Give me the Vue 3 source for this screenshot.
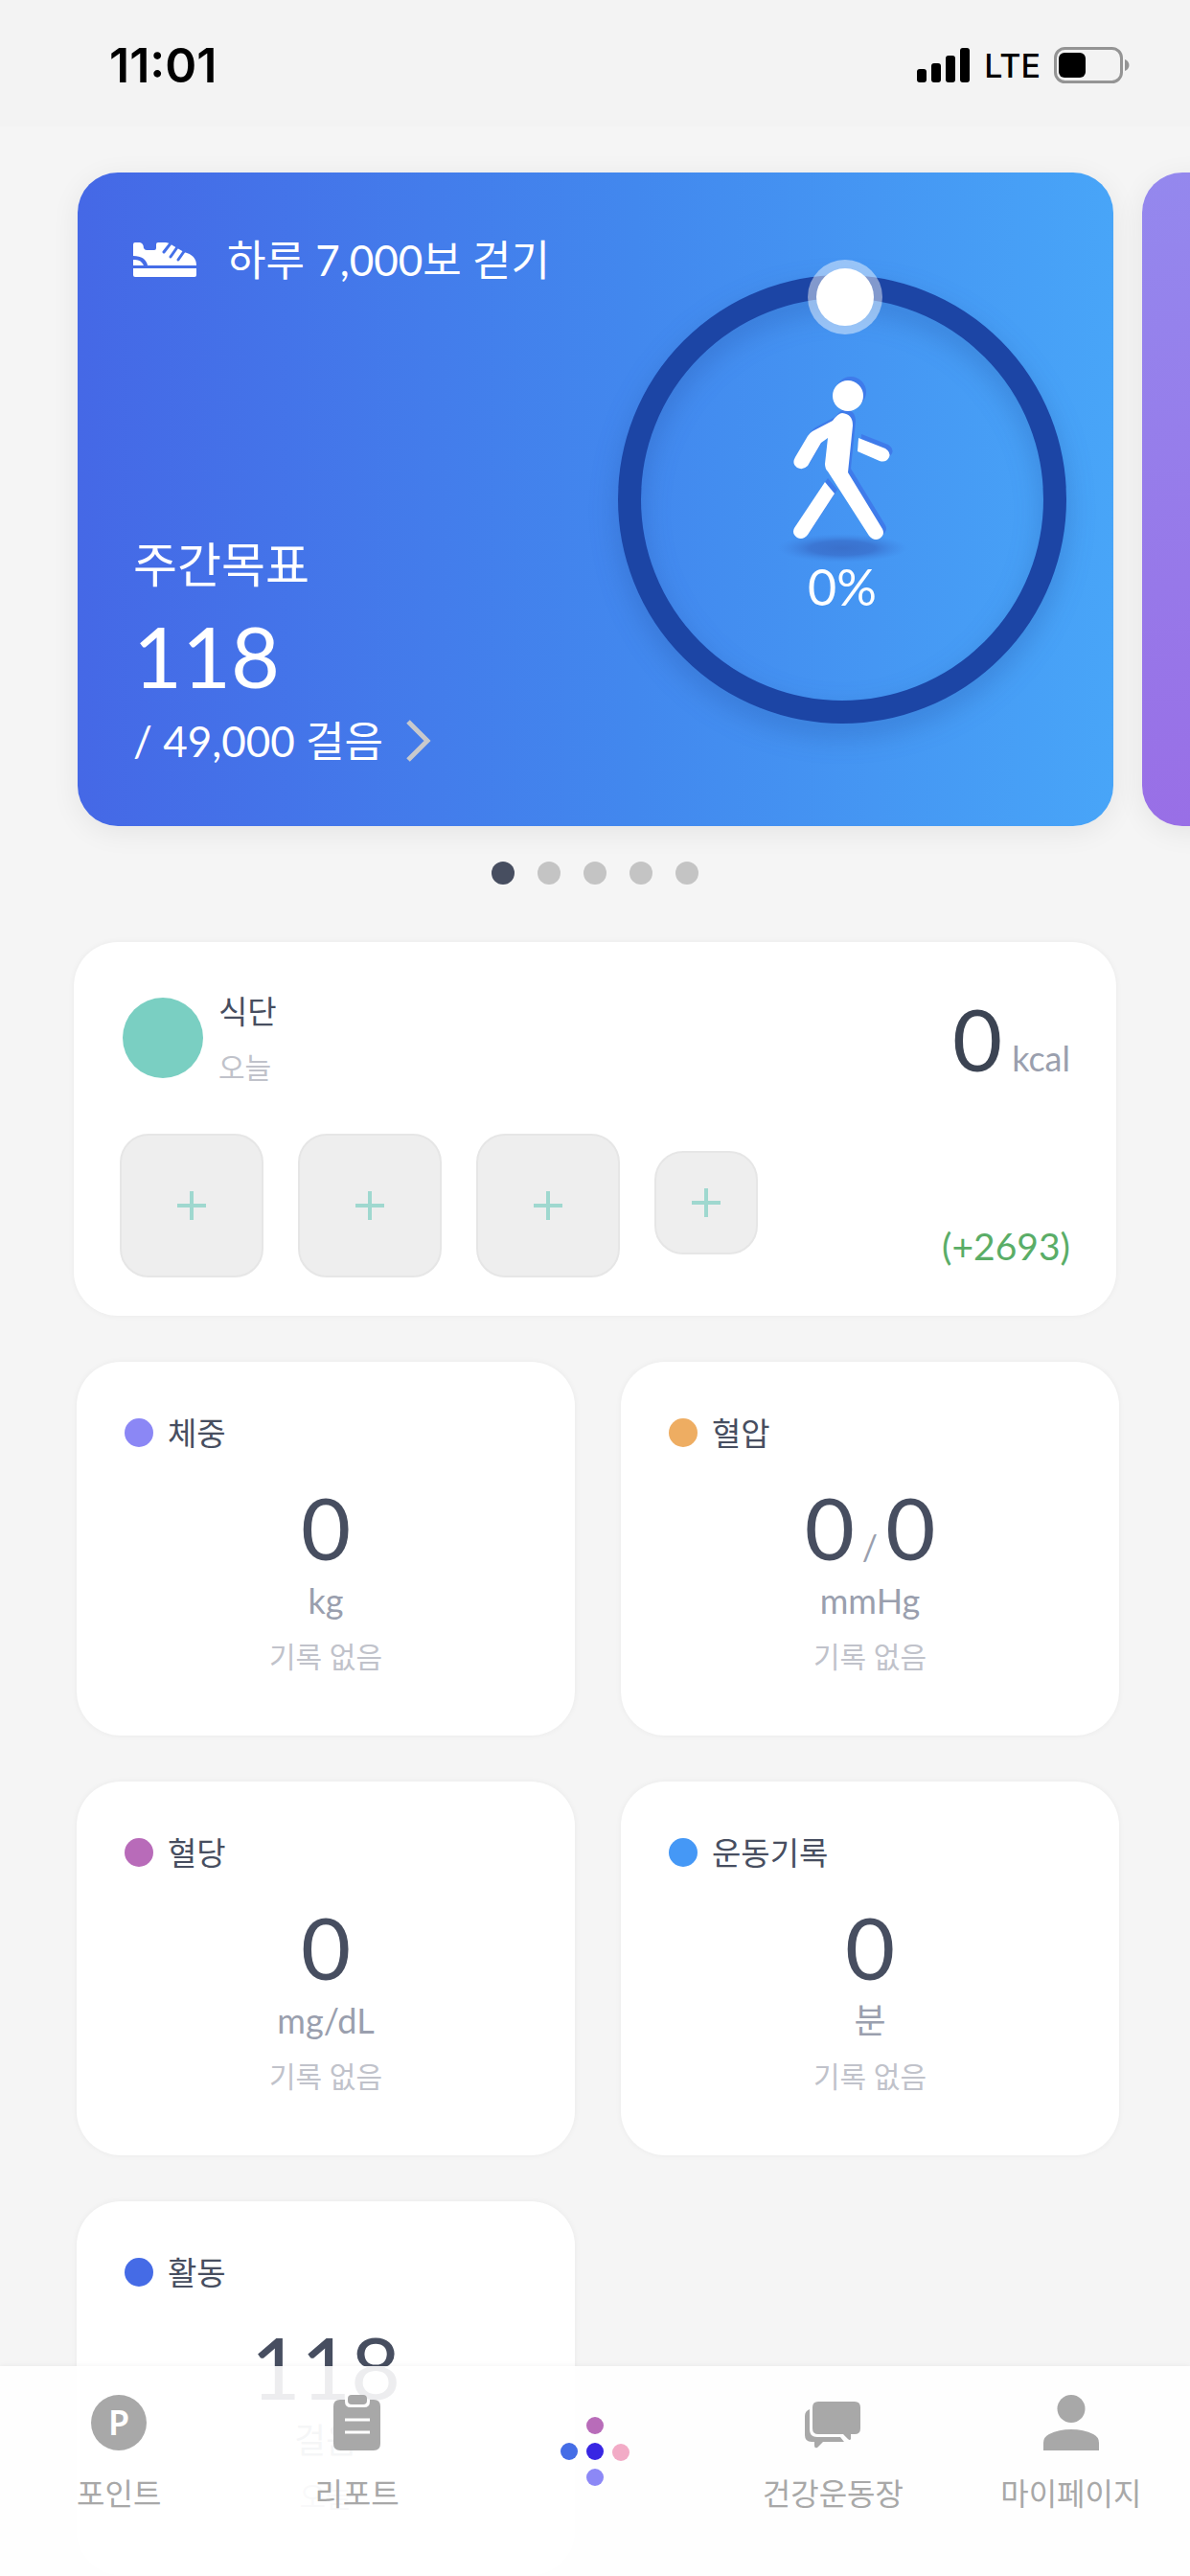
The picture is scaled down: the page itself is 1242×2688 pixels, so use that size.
<script setup>
import { ref } from 'vue'

const slides = 5
const activeSlide = ref(0)

const meals = ['아침', '점심', '저녁', '간식']

const records = [
  { label: '체중', color: '#8b87f5', values: ['0'], unit: 'kg', note: '기록 없음' },
  { label: '혈압', color: '#eead62', values: ['0', '0'], unit: 'mmHg', note: '기록 없음' },
  { label: '혈당', color: '#b86bb9', values: ['0'], unit: 'mg/dL', note: '기록 없음' },
  { label: '운동기록', color: '#4598f6', values: ['0'], unit: '분', note: '기록 없음' },
  { label: '활동', color: '#456be6', values: ['118'], unit: '걸음', note: '오늘' },
]
</script>

<template>
  <div class="app">
    <header class="status">
      <time class="clock">11:01</time>
      <div class="indicators">
        <svg width="56" height="36" viewBox="0 0 56 36" aria-hidden="true">
          <rect x="0" y="22" width="10" height="14" rx="3" />
          <rect x="15" y="16" width="10" height="20" rx="3" />
          <rect x="30" y="8" width="10" height="28" rx="3" />
          <rect x="45" y="0" width="10" height="36" rx="3" />
        </svg>
        <span class="network">LTE</span>
        <svg width="79" height="38" viewBox="0 0 79 38" aria-hidden="true">
          <rect x="1.5" y="1.5" width="69" height="35" rx="10" fill="none" stroke="#949494" stroke-width="3" />
          <rect x="5" y="6" width="28" height="26" rx="6" />
          <path d="M74 13c6 2 6 10 0 12z" fill="#949494" />
        </svg>
      </div>
    </header>

    <main class="content">
      <section class="carousel">
        <article class="slide slide-walk">
          <div class="goal">
            <h2 class="goal-title">
              <svg width="67" height="36" viewBox="0 0 67 36" fill="#fff" aria-hidden="true">
                <path d="M0 27h66v7q0 2-2 2H2q-2 0-2-2z" />
                <path d="M0 2q0-2 2-2h5q4 1 4 6 1 2 3 2h8q2 0 2-2V2q0-2 2-2h8q3 0 7 3l12 7q13 3 13 14H15Q13 14 0 14z" />
                <path d="M0 18q8-1 11 6H0z" />
                <path d="M39 1l-7 9M46 5l-7 10M54 8l-7 10" stroke="#4470e9" stroke-width="3" stroke-linecap="round" />
              </svg>
              <span>하루 7,000보 걷기</span>
            </h2>
            <div class="goal-body">
              <p class="goal-label">주간목표</p>
              <p class="goal-count">118</p>
              <a class="goal-link" href="#steps">
                <span>/ 49,000 걸음</span>
                <svg width="26" height="44" viewBox="0 0 26 44" fill="none" stroke="#c8c9cc" stroke-width="5" aria-hidden="true">
                  <path d="M2 2l20 20L2 42" />
                </svg>
              </a>
            </div>
          </div>
          <div class="ring">
            <svg class="ring-track" viewBox="0 0 468 468" aria-hidden="true">
              <circle class="ring-circle" cx="234" cy="234" r="222" fill="none" stroke="#1c45a5" stroke-width="24" />
              <circle cx="237" cy="23" r="39" fill="#fff" fill-opacity=".45" />
              <circle cx="237" cy="23" r="30" fill="#fff" />
            </svg>
            <div class="ring-info">
              <svg width="136" height="198" viewBox="0 0 136 198" aria-hidden="true">
                <defs>
                  <radialGradient id="ground">
                    <stop offset="0" stop-color="#3a70cb" />
                    <stop offset=".5" stop-color="#3a72cf" stop-opacity=".85" />
                    <stop offset="1" stop-color="#3f84e2" stop-opacity="0" />
                  </radialGradient>
                  <g id="walker">
                    <circle cx="74" cy="23" r="16" />
                    <path d="M58 49L37 60q-3 2-5 5L19 87q-4 7 2 11 6 3 11-2l14-24 7-5-3 27q0 5 3 8l43 67q5 6 11 3 6-4 3-10L74 103l5-49q0-12-11-13-4 0-10 8z" />
                    <path d="M85 67l28 11q6 4 4 9-3 6-10 4L84 81z" />
                    <path d="M50 113l10 12-28 43q-5 6-11 3-6-4-3-10z" />
                  </g>
                </defs>
                <ellipse cx="68" cy="182" rx="68" ry="15" fill="url(#ground)" />
                <use href="#walker" x="3" y="-4" fill="#3f7bea" />
                <use href="#walker" fill="#fff" />
              </svg>
              <span class="percent">0%</span>
            </div>
          </div>
        </article>
        <article class="slide slide-next"></article>
      </section>

      <nav class="pager" aria-label="slides">
        <button
          v-for="n in slides"
          :key="n"
          type="button"
          class="pager-dot"
          :class="{ active: n - 1 === activeSlide }"
          :aria-label="`${n}`"
          @click="activeSlide = n - 1"
        ></button>
      </nav>

      <section class="diet">
        <div class="diet-head">
          <span class="diet-badge"></span>
          <div class="diet-name">
            <h3 class="label">식단</h3>
            <p class="note">오늘</p>
          </div>
          <p class="diet-total"><span class="number">0</span><span class="unit">kcal</span></p>
        </div>
        <div class="diet-row">
          <button v-for="(meal, i) in meals" :key="meal" type="button" class="meal" :class="{ small: i === 3 }" :aria-label="meal">
            <svg width="30" height="30" viewBox="0 0 30 30" stroke="#9fd8cf" stroke-width="4" aria-hidden="true">
              <path d="M15 0v30M0 15h30" />
            </svg>
          </button>
          <p class="diet-left">(+2693)</p>
        </div>
      </section>

      <section class="grid">
        <article v-for="item in records" :key="item.label" class="card">
          <h3 class="card-head">
            <span class="dot" :style="{ background: item.color }"></span>
            <span class="label">{{ item.label }}</span>
          </h3>
          <p class="value">
            <template v-for="(value, i) in item.values" :key="i">
              <span v-if="i" class="slash">/</span>
              <span class="number">{{ value }}</span>
            </template>
          </p>
          <p class="unit">{{ item.unit }}</p>
          <p class="note">{{ item.note }}</p>
        </article>
      </section>
    </main>

    <nav class="tabs">
      <a class="tab" href="#point">
        <span class="tab-icon"><span class="coin">P</span></span>
        <span>포인트</span>
      </a>
      <a class="tab" href="#report">
        <svg class="tab-icon" width="50" height="58" viewBox="0 0 50 58" aria-hidden="true">
          <path d="M7 5h5v2q0 6 6 6h14q6 0 6-6V5h4q7 0 7 7v39q0 7-7 7H7q-7 0-7-7V12q0-7 7-7z" />
          <rect x="15" y="0" width="20" height="10" rx="4" />
          <path d="M12 26h26M12 39h26" stroke="#fff" stroke-width="3" />
        </svg>
        <span>리포트</span>
      </a>
      <a class="tab tab-home" href="#home" aria-label="홈">
        <svg width="72" height="72" viewBox="0 0 72 72" aria-hidden="true">
          <circle cx="36" cy="9" r="9" fill="#b86cb9" />
          <circle cx="9" cy="36" r="9" fill="#456de6" />
          <circle cx="36" cy="36" r="9" fill="#3826e3" />
          <circle cx="63" cy="37" r="9" fill="#f2abc6" />
          <circle cx="36" cy="63" r="9" fill="#8c88f6" />
        </svg>
      </a>
      <a class="tab" href="#gym">
        <svg class="tab-icon" width="58" height="58" viewBox="0 0 58 58" aria-hidden="true">
          <path d="M14 7h38q6 0 6 6v22q0 6-6 6h-4v5q-1 2-3 0l-5-5H14q-6 0-6-6V13q0-6 6-6z" />
          <path d="M5 15v21q0 8 8 8h24l4 5H19l-6 6q-3 1-3-2v-4H7q-7 0-7-7V22q0-5 5-7z" />
        </svg>
        <span>건강운동장</span>
      </a>
      <a class="tab" href="#mypage">
        <svg class="tab-icon" width="58" height="58" viewBox="0 0 58 58" aria-hidden="true">
          <circle cx="29" cy="14.5" r="14.5" />
          <path d="M0 58v-8q0-6 6-9 10-5 23-5t23 5q6 3 6 9v8z" />
        </svg>
        <span>마이페이지</span>
      </a>
    </nav>
  </div>
</template>

<style>
body {
  margin: 0;
  background: #f5f5f5;
}
</style>

<style scoped>
.app {
  position: relative;
  display: flex;
  flex-direction: column;
  height: 100vh;
  overflow: hidden;
  background: #f5f5f5;
  font-family: Lato, "Noto Sans CJK KR", sans-serif;
  color: #474e60;
}
h2, h3, p {
  margin: 0;
  font-weight: 400;
}
a {
  color: inherit;
  text-decoration: none;
}
button {
  padding: 0;
  border: 0;
  cursor: pointer;
}
svg {
  flex: none;
}

.status {
  flex: none;
  display: flex;
  align-items: center;
  justify-content: space-between;
  box-sizing: border-box;
  height: 132px;
  padding: 4px 63px 0 114px;
  background: #f3f3f3;
  color: #000;
  font-family: Inter, sans-serif;
}
.clock {
  font-size: 50px;
  font-weight: 600;
}
.indicators {
  display: flex;
  align-items: center;
  gap: 14px;
}
.network {
  font-size: 34px;
  font-weight: 500;
}

.content {
  flex: 1;
  overflow-y: auto;
  scrollbar-width: none;
  padding-bottom: 220px;
}

.carousel {
  display: flex;
  gap: 30px;
  padding: 48px 0 37px 81px;
  overflow-x: auto;
  scrollbar-width: none;
}
.slide {
  flex: none;
  box-sizing: border-box;
  width: calc(100% - 80px);
  min-height: 682px;
  border-radius: 42px;
  box-shadow: 0 6px 30px rgba(0, 0, 0, 0.07);
}
.slide-walk {
  display: flex;
  align-items: center;
  justify-content: space-between;
  padding: 0 49px 0 58px;
  background: linear-gradient(90deg, #4568e6, #4288ee 54%, #48a5f8);
  color: #fff;
}
.slide-next {
  background: linear-gradient(170deg, #9488ee, #9a68e4);
}
.goal {
  align-self: stretch;
  display: flex;
  flex-direction: column;
  justify-content: space-between;
  padding: 61px 0 59px;
}
.goal-title {
  display: flex;
  align-items: center;
  gap: 31px;
  font-size: 44px;
  line-height: 60px;
}
.goal-label {
  font-size: 50px;
  line-height: 72px;
}
.goal-count {
  font-size: 88px;
  line-height: 118px;
}
.goal-link {
  display: flex;
  align-items: center;
  gap: 24px;
  font-size: 44px;
  line-height: 60px;
}
.ring {
  display: grid;
  width: 468px;
}
.ring-track {
  grid-area: 1 / 1;
  width: 100%;
  overflow: visible;
}
.ring-circle {
  filter: drop-shadow(0 12px 14px rgba(30, 70, 150, 0.3));
}
.ring-info {
  grid-area: 1 / 1;
  display: flex;
  flex-direction: column;
  align-items: center;
  padding-top: 103px;
}
.percent {
  font-size: 52px;
  line-height: 48px;
}

.pager {
  display: flex;
  justify-content: center;
  gap: 24px;
}
.pager-dot {
  width: 24px;
  height: 24px;
  border-radius: 50%;
  background: #c4c4c4;
}
.pager-dot.active {
  background: #474e60;
}

.label {
  font-size: 33px;
  line-height: 48px;
}
.note {
  font-size: 30px;
  line-height: 44px;
  color: #c0c2ca;
}
.number {
  font-size: 90px;
  line-height: 102px;
}
.unit {
  font-size: 36px;
  line-height: 52px;
  color: #9a9fae;
}

.diet {
  margin: 60px 77px 0;
  padding: 48px 48px 40px;
  border-radius: 46px;
  background: #fff;
  box-shadow: 0 0 6px rgba(0, 0, 0, 0.05);
}
.diet-head {
  display: flex;
  align-items: center;
  gap: 16px;
  padding-left: 3px;
}
.diet-badge {
  width: 84px;
  height: 84px;
  border-radius: 50%;
  background: #7acfc2;
}
.diet-name {
  flex: 1;
  display: flex;
  flex-direction: column;
  gap: 12px;
}
.diet-total {
  display: flex;
  align-items: baseline;
  gap: 10px;
  color: #3c4453;
}
.diet-row {
  display: flex;
  align-items: flex-start;
  gap: 36px;
  margin-top: 48px;
}
.meal {
  display: flex;
  align-items: center;
  justify-content: center;
  box-sizing: border-box;
  width: 150px;
  height: 150px;
  border: 2px solid #e6e6e6;
  border-radius: 30px;
  background: #eee;
}
.meal.small {
  width: 108px;
  height: 108px;
  margin-top: 18px;
}
.diet-left {
  margin-left: auto;
  align-self: flex-end;
  font-size: 39px;
  line-height: 66px;
  color: #5aad67;
}

.grid {
  display: grid;
  grid-template-columns: 1fr 1fr;
  gap: 48px;
  padding: 48px 74px 0 80px;
}
.card {
  box-sizing: border-box;
  min-height: 390px;
  padding: 50px;
  border-radius: 46px;
  background: #fff;
  box-shadow: 0 0 6px rgba(0, 0, 0, 0.05);
  text-align: center;
}
.card-head {
  display: flex;
  align-items: center;
  gap: 15px;
}
.dot {
  width: 30px;
  height: 30px;
  border-radius: 50%;
}
.value {
  display: flex;
  align-items: baseline;
  justify-content: center;
  gap: 8px;
  margin-top: 23px;
}
.slash {
  font-size: 36px;
  color: #9a9fae;
}
.card .note {
  margin-top: 10px;
}

.tabs {
  position: absolute;
  right: 0;
  bottom: 0;
  left: 0;
  display: grid;
  grid-template-columns: repeat(5, 1fr);
  box-sizing: border-box;
  height: 219px;
  padding-top: 30px;
  background: rgba(255, 255, 255, 0.9);
  box-shadow: 0 0 6px rgba(0, 0, 0, 0.06);
}
.tab {
  display: flex;
  flex-direction: column;
  align-items: center;
  gap: 21px;
  font-size: 32px;
  line-height: 48px;
  color: #a8a8a8;
}
.tab-icon {
  height: 58px;
  fill: #a8a8a8;
}
.tab-home {
  padding-top: 23px;
}
.coin {
  display: block;
  width: 58px;
  border-radius: 50%;
  background: #a8a8a8;
  color: #fff;
  font-family: "Noto Sans", sans-serif;
  font-size: 36px;
  font-weight: 600;
  line-height: 58px;
  text-align: center;
}
</style>
